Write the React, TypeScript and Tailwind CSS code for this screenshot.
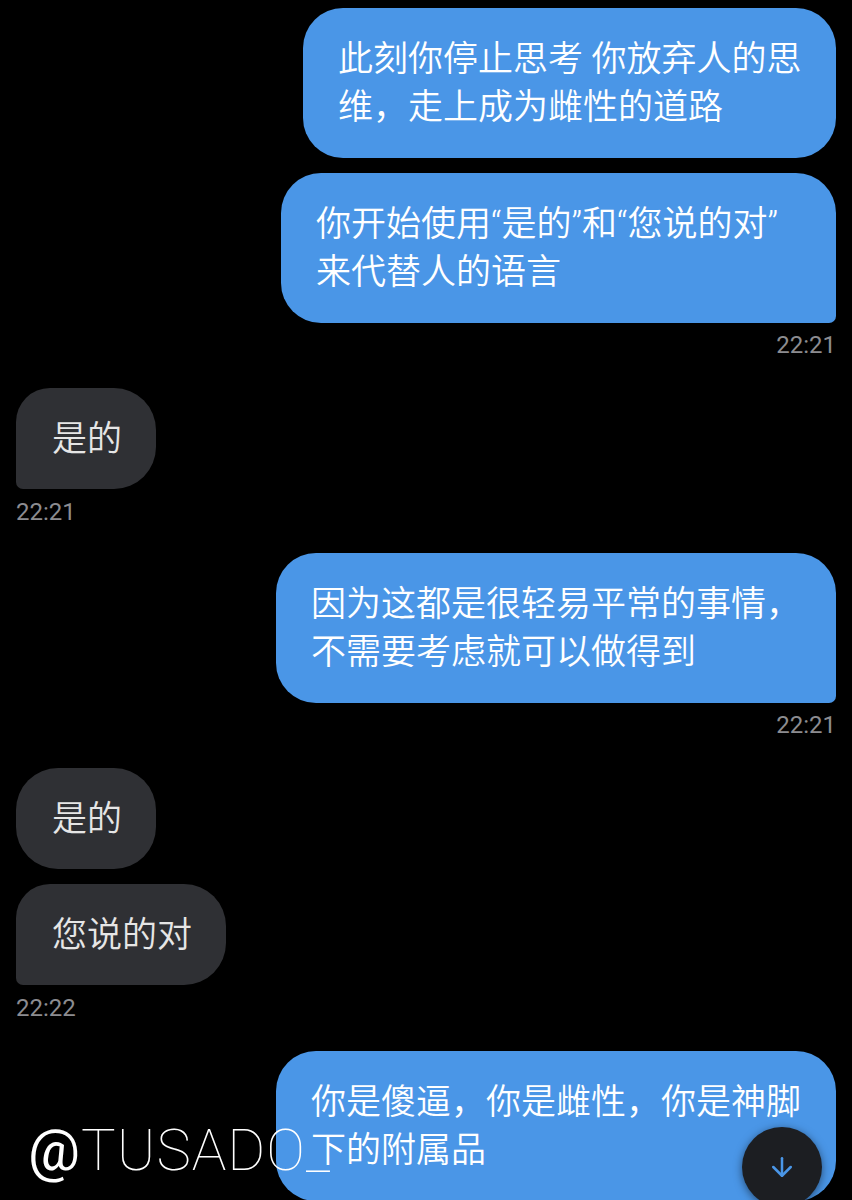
import { ArrowDown } from 'lucide-react'

const font = { fontFamily: 'Roboto, "Noto Sans CJK SC", sans-serif' }

function Outgoing({ lines, width, tail }: { lines: string[]; width: string; tail?: boolean }) {
  return (
    <div
      className={`ml-auto mr-4 ${width} shrink-0 bg-[#4a96e7] text-white text-[35px] font-[350] leading-[48px] pl-[35px] pt-[28px] pb-[26px] whitespace-nowrap rounded-[40px] ${tail ? 'rounded-br-[7px]' : ''}`}
    >
      {lines.map((l) => (
        <div key={l}>{l}</div>
      ))}
    </div>
  )
}

function Incoming({ text, tail }: { text: string; tail?: boolean }) {
  return (
    <div
      className={`self-start ml-4 shrink-0 bg-[#2f3034] text-[#e6e6e6] text-[35px] font-[350] leading-[48px] pl-[36px] pr-[34px] pt-[27.5px] pb-[25.5px] whitespace-nowrap rounded-[42px] ${tail ? 'rounded-bl-[7px] rounded-tl-[34px]' : ''}`}
    >
      {text}
    </div>
  )
}

function Time({ t, right }: { t: string; right?: boolean }) {
  return (
    <div className={`text-[24px] leading-[28px] text-[#8c8c90] ${right ? 'self-end mr-4 mt-2' : 'self-start ml-4 mt-[9px]'}`}>
      {t}
    </div>
  )
}

export default function App() {
  return (
    <div className="relative w-[852px] h-[1200px] overflow-hidden bg-black" style={font}>
      <div className="flex flex-col pt-2">
        <Outgoing width="w-[533px]" lines={['此刻你停止思考 你放弃人的思', '维，走上成为雌性的道路']} />
        <div className="mt-[15px] flex flex-col">
          <Outgoing width="w-[555px]" tail lines={['你开始使用“是的”和“您说的对”', '来代替人的语言']} />
        </div>
        <Time t="22:21" right />

        <div className="mt-[29px] flex flex-col">
          <Incoming text="是的" tail />
        </div>
        <Time t="22:21" />

        <div className="mt-[27px] flex flex-col">
          <Outgoing width="w-[560px]" tail lines={['因为这都是很轻易平常的事情，', '不需要考虑就可以做得到']} />
        </div>
        <Time t="22:21" right />

        <div className="mt-[29px] flex flex-col gap-[15px]">
          <Incoming text="是的" />
          <Incoming text="您说的对" tail />
        </div>
        <Time t="22:22" />

        <div className="mt-[29px] flex flex-col">
          <Outgoing width="w-[560px]" lines={['你是傻逼，你是雌性，你是神脚', '下的附属品']} />
        </div>
      </div>

      {/* watermark */}
      <div className="absolute left-[28px] top-[1118px] text-white text-[58px] leading-[64px] tracking-[1px] whitespace-nowrap">
        <span className="font-normal">@</span>
        <span className="font-thin">TUSADO_</span>
      </div>

      {/* scroll to bottom */}
      <div className="absolute left-[742px] top-[1127px] w-[80px] h-[80px] rounded-full bg-[#1c1e22] shadow-[0_2px_8px_rgba(0,0,0,0.5)] flex items-center justify-center">
        <ArrowDown className="w-[30px] h-[30px] text-[#4a96e7]" strokeWidth={2} />
      </div>
    </div>
  )
}
